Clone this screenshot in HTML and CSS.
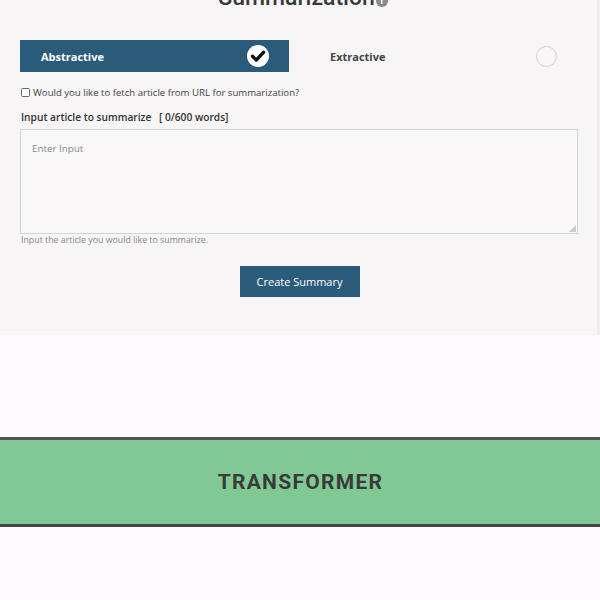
FILE: index.html
```html
<!DOCTYPE html>
<html>
<head>
<meta charset="utf-8">
<link rel="stylesheet" href="styles.css">
</head>
<body>
<div class="panel">
  <h1 class="title"><span class="title-text">Summarization<span class="info">i</span></span></h1>
  <div class="modes">
    <div class="mode active">
      <span class="mode-label">Abstractive</span>
      <svg class="check" width="24" height="24" viewBox="0 0 24 24"><circle cx="12" cy="12" r="11" fill="#fff"/><path d="M6.5 12.3 L10.3 16 L17.5 8.3" fill="none" stroke="#111" stroke-width="3.4" stroke-linecap="round" stroke-linejoin="round"/></svg>
    </div>
    <div class="mode second">
      <span class="mode-label">Extractive</span>
      <span class="radio"></span>
    </div>
  </div>
  <label class="fetch"><span class="box"></span>Would you like to fetch article from URL for summarization?</label>
  <div class="field-label">Input article to summarize <span class="count">[ 0/600 words]</span></div>
  <div class="textarea">
    <span class="placeholder">Enter Input</span>
    <svg class="grip" width="7" height="7" viewBox="0 0 7 7"><path d="M7 0 L0 7 L7 7 Z" fill="#c8ccd0"/></svg>
  </div>
  <div class="help">Input the article you would like to summarize.</div>
  <div class="actions"><button class="submit">Create Summary</button></div>
</div>
<div class="gap"></div>
<div class="band">TRANSFORMER</div>
</body>
</html>
```
FILE: styles.css
```css
html, body { margin: 0; padding: 0; }
body {
  background: #fdfbfd;
  font-family: "Open Sans", "Liberation Sans", sans-serif;
  width: 600px;
  height: 600px;
  overflow: hidden;
}
.panel {
  background: #f7f5f6;
  height: 335px;
  padding: 0 19px 0 20px;
  box-sizing: border-box;
  border-right: 3px solid #eeeced;
}
.title {
  margin: 0;
  height: 40px;
  padding-left: 8px;
  box-sizing: border-box;
  text-align: center;
  font-family: Roboto, "Liberation Sans", sans-serif;
  font-weight: 500;
  font-size: 23px;
  line-height: 27px;
  color: #3a3a3a;
}
.title-text {
  display: block;
  transform: translateY(-16px);
}
.info {
  display: inline-block;
  width: 12px;
  height: 12px;
  border-radius: 50%;
  background: #8a8a8a;
  color: #fff;
  font-size: 9px;
  line-height: 12px;
  font-weight: 700;
  vertical-align: 1px;
  margin-left: 1px;
}
.modes {
  display: flex;
  height: 32px;
}
.mode {
  width: 269px;
  display: flex;
  align-items: center;
  justify-content: space-between;
  padding: 0 20px 0 21px;
  box-sizing: border-box;
}
.mode.second {
  width: auto;
  flex: 1;
  padding-left: 41px;
  padding-right: 21px;
}
.mode.active {
  background: #2a5b7a;
}
.mode-label {
  font-size: 11px;
  font-weight: 700;
  color: #444;
}
.active .mode-label { color: #fff; }
.check { display: block; margin-right: -1px; }
.radio {
  width: 21px;
  height: 21px;
  border: 1.5px solid #cfcfcf;
  border-radius: 50%;
  box-sizing: border-box;
}
.fetch {
  display: flex;
  align-items: center;
  margin-top: 14px;
  font-size: 9.6px;
  color: #444;
  padding-left: 1px;
}
.box {
  width: 7px;
  height: 7px;
  border: 1px solid #666;
  border-radius: 1.5px;
  background: #fff;
  margin-right: 3px;
}
.field-label {
  margin-top: 11px;
  padding-left: 1px;
  font-size: 10.2px;
  font-weight: 600;
  color: #333;
}
.count { margin-left: 5px; }
.textarea {
  position: relative;
  margin-top: 5px;
  height: 105px;
  border: 1.5px solid #c9d6df;
  box-sizing: border-box;
  background: #f9f7f8;
  padding: 5px 11px;
}
.placeholder {
  font-size: 9.8px;
  color: #888;
}
.grip {
  position: absolute;
  right: 1px;
  bottom: 1px;
}
.help {
  margin-top: 0;
  font-size: 8.8px;
  color: #888;
  padding-left: 1px;
}
.actions {
  display: flex;
  justify-content: center;
  margin-top: 20px;
  padding-left: 1px;
}
.submit {
  width: 120px;
  height: 31px;
  background: #2a5b7a;
  color: #fff;
  border: none;
  font-family: "Open Sans", "Liberation Sans", sans-serif;
  font-size: 11px;
  padding: 0;
}
.gap { height: 102px; }
.band {
  height: 90px;
  background: #80c994;
  border-top: 3px solid #555;
  border-bottom: 3px solid #454545;
  box-sizing: border-box;
  display: flex;
  align-items: center;
  justify-content: center;
  font-family: Roboto, "Liberation Sans", sans-serif;
  font-weight: 700;
  font-size: 21px;
  color: #3a3a3a;
  letter-spacing: 1.3px;
  padding-left: 1px;
}
```
